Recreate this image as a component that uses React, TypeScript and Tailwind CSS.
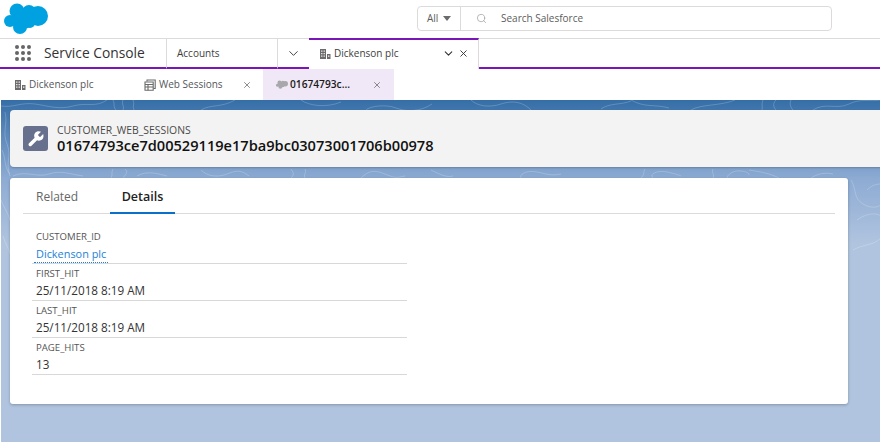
import { ChevronDown, X, Search } from "lucide-react";

const fields = [
  { label: "CUSTOMER_ID", value: "Dickenson plc", link: true },
  { label: "FIRST_HIT", value: "25/11/2018 8:19 AM" },
  { label: "LAST_HIT", value: "25/11/2018 8:19 AM" },
  { label: "PAGE_HITS", value: "13" },
];

const AccountIcon = () => (
  <svg viewBox="0 0 12 12" className="w-[12px] h-[12px] text-[#6b6b6b] shrink-0" fill="currentColor">
    <path d="M1 1h6v10H1z" />
    <path d="M8 6h3.500v5H8z" />
    <path d="M2.200 2.500h1.200v1.200H2.200zM4.600 2.500h1.200v1.200H4.600zM2.200 5h1.200v1.200H2.200zM4.600 5h1.200v1.200H4.600zM2.200 7.500h1.200v1.200H2.200zM4.600 7.500h1.200v1.200H4.600zM9 7.500h1.400v1.200H9z" fill="#fff" />
  </svg>
);

const Cloud = ({ className }: { className: string }) => (
  <svg viewBox="0 0 44 31" className={className} fill="currentColor">
    <circle cx="13" cy="8" r="7.500" />
    <circle cx="25" cy="9" r="7" />
    <circle cx="34" cy="13" r="10" />
    <circle cx="16" cy="24" r="7" />
    <circle cx="6" cy="18" r="6" />
    <circle cx="20" cy="16" r="10" />
    <circle cx="26" cy="20" r="5" />
  </svg>
);

const WebIcon = () => (
  <svg viewBox="0 0 12 12" className="w-[12px] h-[12px] text-[#6b6b6b] shrink-0" fill="none" stroke="currentColor" strokeWidth="1.1">
    <path d="M3 2.500V1h8.200v8.500H9.500" />
    <path d="M1 3h8.200v8.200H1z" />
    <path d="M1 5.500h8.200M1 8h8.200M4 5.500v5.700" />
  </svg>
);

const Wrench = () => (
  <svg viewBox="0 0 24 24" className="w-[18px] h-[18px]" fill="#fff">
    <path d="M21.600 5.300l-3.700 3.700c-.3.300-.8.300-1.100 0l-1.800-1.800c-.3-.3-.3-.8 0-1.100l3.700-3.700C17.700 2.100 16.600 1.800 15.500 1.800c-3.500 0-6.300 3-5.900 6.600.1.800.3 1.400.6 2l-7.500 7.400c-.9.900-.9 2.400 0 3.300.9.900 2.400.9 3.300 0l7.400-7.500c.6.300 1.300.5 2 .6 3.600.4 6.600-2.400 6.600-5.900 0-1-.2-2-.4-3z" />
  </svg>
);

// topographic lines behind the cards
const Contours = () => (
  <svg className="absolute left-0 top-0 w-[880px] h-[190px]" viewBox="0 0 880 190" fill="none" stroke="#ffffff" strokeOpacity="0.2" strokeWidth="1">
    <path d="M0 6c12 2 20-4 34-2s24 6 38 2 22 2 34-6M112 0c2 4 0 7 3 10M122 0c-2 4 2 7 0 10M132 0c2 4-1 7 1 10M200 10c10-6 20-2 34-10M300 0c8 6 26 8 40 2M365 10c4-4 20-6 30-2s24 4 36-4M470 0c6 6 18 8 30 4s22-2 30 6M600 9c8-6 20-4 30-8M630 0c14 8 24 4 38 8M690 10c10-6 30-4 44-10M762 0c-2 4 0 7-1 10M775 0c-4 4-2 8 0 10M790 0c-2 4 0 8 2 10M812 10c12-8 24 0 36-6s20-2 32-4" />
    <path d="M4 12c3 12-3 20 2 32s-2 20 3 32M1 50c4 8 2 18 8 24M0 100c4 10 8 14 10 24M2 136c2 8 6 12 8 20M850 80c6 10 2 18 12 24s18 2 18 0M856 120c8-6 18-8 24-4M866 90c4-4 8-6 14-6M852 150c10-6 20-4 28-12" />
    <path d="M12 76c12-6 24 2 36-2s20 0 34 2M110 78c2-3 0-6 2-9M122 78c2-3 6-6 2-9M136 76c10-6 22-2 30 0M200 70c6 6 16 8 26 4s14-4 22 2M290 78c4-4 2-6 0-9M304 78c-2-3 2-6 0-9M360 78c8-8 14-8 24-4s10 4 20 2M430 70c8 4 16 8 22 6M520 78c-2-4 6-8 16-6s14 4 24 2M640 78c4-4 2-6 4-9M652 78c-4-4 4-8 14-6s14 4 14 4M712 78c2-3-2-6 0-9M726 78c0-3 6-8 14-7s8 3 8 4M778 78c-10-5-18-6-30-8M810 78c6-4 14-6 22-4" />
  </svg>
);

const App = () => {
  return (
    <div className="w-[880px] h-[442px] overflow-hidden bg-white flex flex-col font-['Open_Sans','Noto_Sans',sans-serif] text-[#16325c]">
      {/* global header */}
      <div className="h-[38px] flex shrink-0 items-start">
        <div className="w-[417px] shrink-0 pl-[4px] pt-[3px]">
          <Cloud className="w-[44px] h-[31px] text-[#00a1e0]" />
        </div>
        <div className="w-[415px] h-[25px] mt-[6px] border border-[#dddbda] rounded-[4px] flex items-center text-[10px] text-[#5c5c5c]">
          <div className="w-[43px] h-full border-r border-[#dddbda] flex items-center pl-[9px] gap-[5px]">
            All
            <span className="w-0 h-0 border-x-[4px] border-x-transparent border-t-[5px] border-t-[#6b6b6b]" />
          </div>
          <Search className="w-[11px] h-[11px] ml-[15px] text-[#9a9a9a]" strokeWidth={1.5} />
          <span className="ml-[14px]">Search Salesforce</span>
        </div>
      </div>

      {/* nav bar */}
      <div className="h-[31px] flex shrink-0 border-t border-[#dddbda] relative">
        <div className="w-[167px] flex items-center border-r border-[#dddbda] border-b-[2px] border-b-[#7a16b8]">
          <div className="ml-[15px] grid grid-cols-3 gap-[2.500px] w-[16px]">
            {Array.from({ length: 9 }).map((_, i) => (
              <span key={i} className="w-[3.500px] h-[3.500px] rounded-full bg-[#666666]" />
            ))}
          </div>
          <span className="ml-[13px] text-[13.800px] text-[#333333] whitespace-nowrap">Service Console</span>
        </div>
        <div className="w-[111px] flex items-center pl-[10px] text-[10px] text-[#3e3e3c] border-r border-[#dddbda] border-b-[2px] border-b-[#7a16b8]">
          Accounts
        </div>
        <div className="w-[31px] flex items-center justify-center border-b-[2px] border-b-[#7a16b8]">
          <ChevronDown className="w-[15px] h-[15px] text-[#444444]" strokeWidth={1.6} />
        </div>
        <div className="w-[170px] flex items-center border-t-[2px] border-t-[#7a16b8] border-r border-r-[#dddbda] -mt-px pb-[2px] pl-[10px] text-[10px] text-[#3e3e3c] whitespace-nowrap">
          <AccountIcon />
          <span className="ml-[3px] w-[109px]">Dickenson plc</span>
          <ChevronDown className="w-[13px] h-[13px] text-[#333333] -ml-[1px]" strokeWidth={2} />
          <X className="w-[11px] h-[11px] ml-[3px] text-[#333333]" strokeWidth={2} />
        </div>
        <div className="flex-1 border-b-[2px] border-b-[#7a16b8]" />
      </div>

      {/* workspace tabs */}
      <div className="h-[31px] flex shrink-0 items-stretch text-[10px] text-[#54565a] whitespace-nowrap">
        <div className="w-[144px] flex items-center pl-[14px] gap-[3px]">
          <AccountIcon />
          Dickenson plc
        </div>
        <div className="w-[119px] flex items-center">
          <WebIcon />
          <span className="ml-[3px] w-[83px]">Web Sessions</span>
          <X className="w-[10px] h-[10px] text-[#555555]" strokeWidth={1.6} />
        </div>
        <div className="w-[131px] bg-[#f0e8f6] flex items-center pl-[13px] font-semibold text-[#1a1a1a]">
          <Cloud className="w-[12px] h-[9px] text-[#a8a8ac] shrink-0" />
          <span className="ml-[2px] w-[82px] text-[10.200px]">01674793c...</span>
          <X className="w-[10px] h-[10px] text-[#555555]" strokeWidth={1.6} />
        </div>
      </div>

      {/* page body */}
      <div className="relative flex-1 ml-px bg-gradient-to-b from-[#356ea7] via-[#8dabd3] via-[23%] to-[#b0c4df] to-[42%] pl-[9px] pt-[10px] overflow-hidden">
        <Contours />
        <div className="relative h-[57px] -mr-[2px] bg-[#f3f3f3] rounded-l-[4px] shadow-[0_1px_2px_rgba(0,0,0,0.2)] flex items-center pl-[13px]">
          <div className="w-[25px] h-[25px] rounded-[3px] bg-[#67708c] flex items-center justify-center">
            <Wrench />
          </div>
          <div className="ml-[9px] whitespace-nowrap">
            <div className="text-[10.400px] leading-[13px] text-[#4a4a4a]">CUSTOMER_WEB_SESSIONS</div>
            <div className="text-[14.600px] leading-[16px] font-semibold text-[#111111]">
              01674793ce7d00529119e17ba9bc03073001706b00978
            </div>
          </div>
        </div>

        <div className="relative mt-[11px] w-[838px] h-[226px] bg-white rounded-[3px] shadow-[0_1px_3px_rgba(0,0,0,0.25)] pt-[4px]">
          <div className="mx-[13px] h-[32px] border-b border-[#dddbda] flex">
            <div className="w-[87px] pl-[13px] pb-[1px] flex items-center text-[12px] text-[#666666]">Related</div>
            <div className="w-[65px] -mb-px flex items-center justify-center text-[12.500px] font-semibold text-[#222222] border-b-2 border-[#0a6fc9]">
              Details
            </div>
          </div>
          <div className="w-[375px] ml-[22px] mt-[13px]">
            {fields.map((f) => (
              <div key={f.label} className="h-[37px] border-b border-[#d8d8d8] px-[4px] pt-[4px]">
                <div className="text-[9.600px] leading-[12px] text-[#555555]">{f.label}</div>
                <div className="mt-[3px] text-[11.700px] leading-[14px] text-[#333333]">
                  {f.link ? (
                    <span className="text-[10.900px] text-[#1b7fd6] border-b border-dotted border-[#1b7fd6] -mx-[2px] px-[2px] pb-[1px]">{f.value}</span>
                  ) : (
                    f.value
                  )}
                </div>
              </div>
            ))}
          </div>
        </div>
      </div>
    </div>
  );
};

export default App;
